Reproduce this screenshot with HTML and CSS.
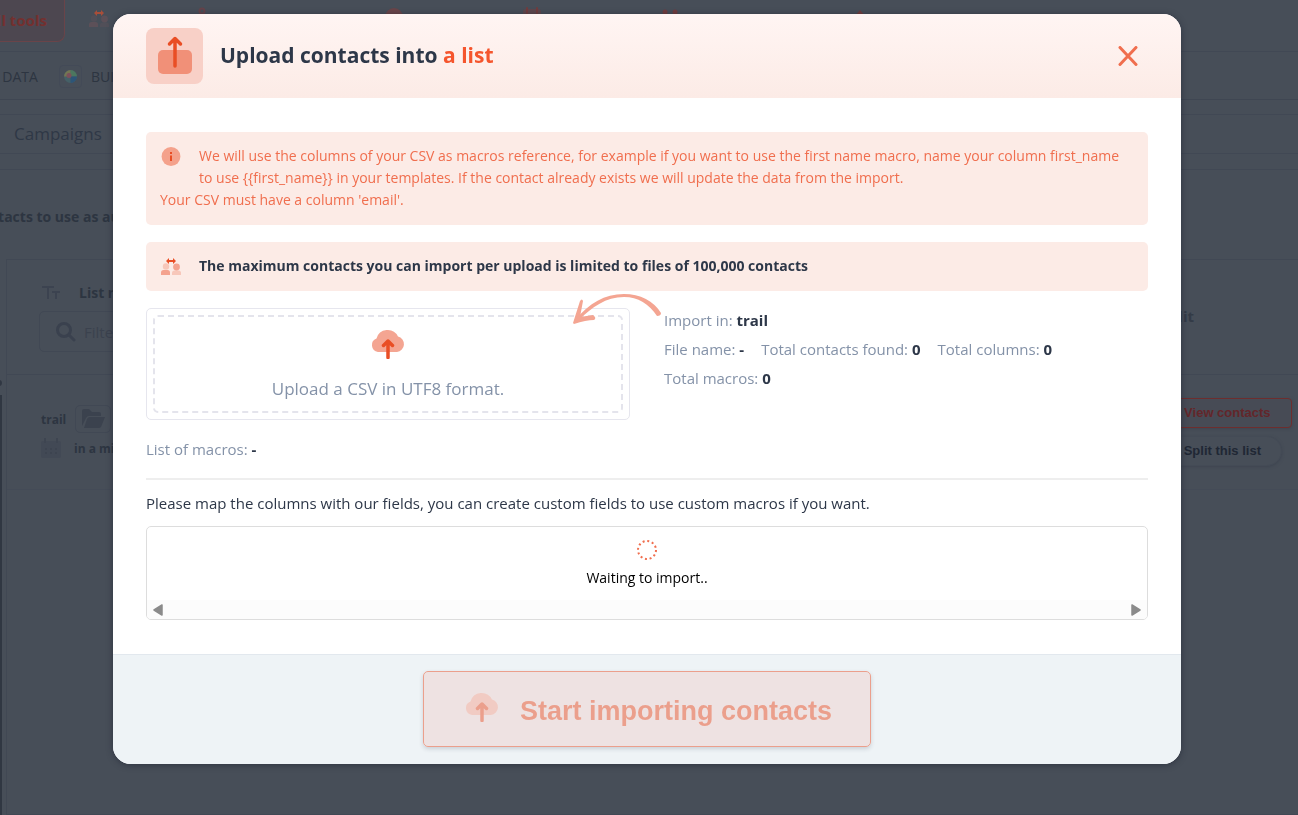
FILE: index.html
```html
<!DOCTYPE html>
<html lang="en">

<head>
    <meta charset="UTF-8">
    <meta name="viewport" content="width=device-width, initial-scale=1.0">
    <title>Upload contacts</title>
    <link rel="stylesheet" href="styles.css">
</head>

<body>
    <!-- shared icons -->
    <svg class="sprite" aria-hidden="true">
        <symbol id="people" viewBox="0 0 20 17">
            <circle cx="5" cy="8.500" r="3.200" fill="currentColor" opacity=".4" />
            <path d="M0 17v-2.500Q0 12 2.500 12h4Q9 12 9 14.500V17z" fill="currentColor" opacity=".8" />
            <circle cx="15.500" cy="9" r="3.400" fill="currentColor" opacity=".8" />
            <path d="M11 17v-2q0-2.500 2.500-2.500h4q2.500 0 2.500 2.500v2z" fill="currentColor" opacity=".4" />
            <path class="people-arrow" d="M5 3l3-3v2h4V0l3 3-3 3V4H8v2z" />
        </symbol>
        <symbol id="cloud" viewBox="0 0 34 30">
            <path d="M7 23a7 7 0 0 1-1.500-13.500A11.500 11.500 0 0 1 27 7.500 7.900 7.900 0 0 1 26 23z" fill="#f4a592" />
            <path d="M17 28.500V12M12.500 16.500L17 12l4.500 4.500" fill="none" stroke="#e94e25" stroke-width="3.500" stroke-linecap="round" stroke-linejoin="round" />
        </symbol>
    </svg>

    <div class="page">
        <div class="tools">
            <button type="button" class="all-tools">All tools</button>
            <svg class="tool-icon people" width="20" height="17"><use href="#people" /></svg>
            <svg class="tool-icon wide" width="20" height="20" viewBox="0 0 20 20"><circle cx="8" cy="5" r="2.500" fill="none" stroke="#65434a" stroke-width="2" /><path d="M8 7v11" stroke="#65434a" stroke-width="2" /></svg>
            <svg class="tool-icon" width="20" height="20" viewBox="0 0 20 20"><circle cx="10" cy="11" r="9" fill="#6a4549" /></svg>
            <svg class="tool-icon" width="20" height="20" viewBox="0 0 20 20"><rect x="1" y="3" width="18" height="16" rx="3" fill="#5e474d" /><path d="M5 2v5M15 2v5" stroke="#703c3e" stroke-width="2" stroke-linecap="round" /></svg>
            <svg class="tool-icon wide" width="20" height="20" viewBox="0 0 20 20"><circle cx="5" cy="6" r="2.500" fill="#703c3e" /><circle cx="15" cy="6" r="2.500" fill="#703c3e" /></svg>
            <svg class="tool-icon" width="20" height="20" viewBox="0 0 20 20"><path d="M10 4l5 6H5z" fill="#703c3e" /></svg>
        </div>
        <div class="subtools">
            <span class="data">GET DATA</span>
            <span class="swirl">
                <svg width="13" height="13" viewBox="0 0 13 13"><circle cx="6.500" cy="6.500" r="6.500" fill="#456067" /><path d="M6.500 0A6.500 6.500 0 0 1 13 6.500H6.500z" fill="#4c775f" /><path d="M13 6.500A6.500 6.500 0 0 1 6.500 13V6.500z" fill="#2d5578" /><path d="M6.500 0A6.500 6.500 0 0 0 0 6.500h6.500z" fill="#737653" /><circle cx="5" cy="5.500" r="2.500" fill="#7c4f5b" /></svg>
            </span>
            <span>BUILD</span>
        </div>
        <nav class="tabs"><a href="#">Campaigns</a></nav>
        <p class="intro">contacts to use as audience</p>
        <div class="list">
            <div class="list-head">
                <div class="filter">
                    <label for="listName">
                        <svg width="18" height="14" viewBox="0 0 18 14" fill="none" stroke="#3c4350" stroke-width="2"><path d="M0 1h12M6 1v12M10 6h8M14 6v7" /></svg>
                        List name
                    </label>
                    <div class="search">
                        <svg width="20" height="20" viewBox="0 0 20 20" fill="none" stroke="#3a414e" stroke-width="3" stroke-linecap="round"><circle cx="8" cy="8" r="6.500" /><path d="M13 13l5 5" /></svg>
                        <input type="text" id="listName" placeholder="Filter">
                    </div>
                </div>
                <span class="split-head">Split</span>
            </div>
            <div class="list-row">
                <div class="list-info">
                    <div class="list-title">trail
                        <span class="folder"><svg width="24" height="20" viewBox="0 0 24 20" fill="#3b424e"><path d="M1 17V2q0-2 2-2h5l3 3h7q2 0 2 2v2H8q-2 0-3 2z" /><path d="M3 19l3-9q1-2 3-2h15l-4 10q-1 1-2 1z" /></svg></span>
                    </div>
                    <div class="list-date">
                        <svg width="20" height="20" viewBox="0 0 20 20"><rect y="3" width="20" height="17" rx="2" fill="#424955" /><path d="M4 0v5M16 0v5" stroke="#3e4551" stroke-width="2" /><path d="M4 11h12M4 15h12" stroke="#3d4450" stroke-width="2" stroke-dasharray="2 3" /></svg>
                        in a minute
                    </div>
                </div>
                <div class="list-actions">
                    <button type="button" class="view">View contacts</button>
                    <button type="button" class="split">Split this list</button>
                </div>
            </div>
        </div>
        <div class="side-handle"></div>
    </div>

    <div class="overlay">
        <div class="modal" role="dialog" aria-labelledby="modalTitle">
            <div class="modal-header">
                <span class="title-icon">
                    <svg width="36" height="40" viewBox="0 0 36 40"><rect x="1" y="14" width="34" height="24" rx="5" fill="#f19078" /><path d="M18 30V3M12.500 8L18 2.500 23.500 8" fill="none" stroke="#e94e25" stroke-width="3.500" stroke-linecap="round" stroke-linejoin="round" /></svg>
                </span>
                <h1 id="modalTitle">Upload contacts into <span>a list</span></h1>
                <button type="button" class="close" aria-label="Close">
                    <svg width="20" height="20" viewBox="0 0 20 20"><path d="M2 1.500l16 17M18 1.500l-16 17" stroke="#f06e4e" stroke-width="3" stroke-linecap="round" /></svg>
                </button>
            </div>

            <div class="modal-body">
                <div class="alert">
                    <div class="alert-line">
                        <svg class="alert-icon" width="22" height="22" viewBox="0 0 22 22"><circle cx="11" cy="11.500" r="9.400" fill="#f4a18b" /><path d="M11 10.500v5.500" stroke="#e94e25" stroke-width="2" /><path d="M11 7v2" stroke="#e94e25" stroke-width="2" /></svg>
                        <p>We will use the columns of your CSV as macros reference, for example if you want to use the first name macro, name your column first_name to use {{first_name}} in your templates. If the contact already exists we will update the data from the import.</p>
                    </div>
                    <p>Your CSV must have a column 'email'.</p>
                </div>
                <div class="alert alert-limit">
                    <div class="alert-line">
                        <svg class="alert-icon people" width="22" height="22" viewBox="-1 -3 22 22"><use href="#people" width="20" height="17" /></svg>
                        <p>The maximum contacts you can import per upload is limited to files of 100,000 contacts</p>
                    </div>
                </div>

                <div class="import">
                    <div class="upload">
                        <label class="drop" for="csvFile">
                            <svg width="34" height="30"><use href="#cloud" /></svg>
                            Upload a CSV in UTF8 format.
                        </label>
                        <input type="file" id="csvFile" accept=".csv">
                        <svg class="arrow" width="90" height="34" viewBox="0 0 90 34" fill="#f4a592">
                            <path d="M3 27C18 10 32 1 52 1c16 0 30 7 37 19q0 3-4 3C77 11 66 4 52 4 34 4 20 14 7 27z" />
                            <path d="M1 30L8 8q2-3 3 0L8 24l13-2q4 3 1 5-8 0-20 4z" />
                        </svg>
                    </div>
                    <div class="stats">
                        <span>Import in: <b>trail</b></span>
                        <div class="stats-row">
                            <span>File name: <b>-</b></span>
                            <span>Total contacts found: <b>0</b></span>
                            <span>Total columns: <b>0</b></span>
                        </div>
                        <span>Total macros: <b>0</b></span>
                    </div>
                </div>

                <p class="macros">List of macros: <b>-</b></p>
                <p class="map-text">Please map the columns with our fields, you can create custom fields to use custom macros if you want.</p>

                <div class="mapping">
                    <div class="waiting">
                        <svg width="20" height="20" viewBox="0 0 20 20"><circle cx="10" cy="10" r="9" fill="none" stroke="#f06e4e" stroke-width="2" stroke-dasharray="2 2.712" /></svg>
                        Waiting to import..
                    </div>
                    <div class="scroll">
                        <svg width="10" height="12" viewBox="0 0 10 12"><path d="M9 1v10L1 6z" fill="#8b8b8b" stroke="#8b8b8b" stroke-width="1.500" stroke-linejoin="round" /></svg>
                        <svg width="10" height="12" viewBox="0 0 10 12"><path d="M1 1v10l8-5z" fill="#8b8b8b" stroke="#8b8b8b" stroke-width="1.500" stroke-linejoin="round" /></svg>
                    </div>
                </div>
            </div>

            <div class="modal-footer">
                <button type="button" class="start" disabled>
                    <svg width="34" height="30"><use href="#cloud" /></svg>
                    Start importing contacts
                </button>
            </div>
        </div>
    </div>
</body>

</html>
```
FILE: styles.css
```css
* {
    box-sizing: border-box;
}

body {
    margin: 0;
    background: #474e58;
    color: #2d3748;
    font-family: "Open Sans", "Noto Sans", sans-serif;
    font-size: 15px;
}

p,
h1 {
    margin: 0;
}

svg {
    display: block;
    flex-shrink: 0;
}

button {
    font-family: "Liberation Sans", Arial, sans-serif;
    font-weight: bold;
}

.sprite {
    position: absolute;
    width: 0;
    height: 0;
}

.people {
    color: #f19078;
}

.people-arrow {
    fill: #e94e25;
}

/* page behind the modal */
.page {
    position: relative;
    display: flex;
    flex-direction: column;
    height: 100vh;
    overflow: hidden;
    color: #2d3541;
}

.tools {
    display: flex;
    align-items: flex-start;
    height: 52px;
    margin-left: -56px;
    border-bottom: 1px solid #414854;
}

.all-tools {
    width: 121px;
    height: 42px;
    padding: 0 17px 2px;
    text-align: right;
    font-family: inherit;
    font-size: 15px;
    color: #74302f;
    background: #4d4750;
    border: 1px solid #6a4449;
    border-top: 0;
    border-radius: 0 0 8px 8px;
}

.tool-icon {
    margin: 6px 59px 0;
}

.tool-icon.wide {
    margin-right: 111px;
}

.tool-icon.people {
    margin: 10px 26px 0 24px;
    color: #74545a;
    opacity: 0.6;
}

.subtools {
    display: flex;
    align-items: center;
    height: 48px;
    padding-top: 2px;
    margin-left: -27px;
    font-size: 14px;
    border-bottom: 1px solid #3f4652;
}

.swirl {
    padding: 4px;
    margin: 0 9px 0 21px;
    border: 1px solid #434a57;
    border-radius: 4px;
}

.tabs {
    height: 40px;
    margin-top: 14px;
    padding-left: 14px;
    line-height: 37px;
    font-size: 17px;
    border: solid #414854;
    border-width: 1px 0;
}

.tabs a {
    color: #2f3846;
    text-decoration: none;
}

.intro {
    height: 90px;
    margin-top: 15px;
    margin-left: -27px;
    padding-top: 36px;
    font-size: 14px;
    font-weight: bold;
    line-height: 22px;
    border-top: 1px solid #414854;
}

.list {
    flex: 1;
    margin-left: 6px;
    border: solid #414854;
    border-width: 1px 0 1px 1px;
}

.list-head {
    display: flex;
    justify-content: space-between;
    height: 115px;
    padding: 22px 104px 0 32px;
    border-bottom: 1px solid #414854;
}

.filter label {
    display: flex;
    align-items: center;
    gap: 19px;
    padding-left: 3px;
    font-size: 14px;
    line-height: 22px;
    font-weight: bold;
}

.search {
    display: flex;
    align-items: center;
    gap: 8px;
    width: 200px;
    height: 41px;
    margin-top: 7px;
    padding-left: 16px;
    border: 1px solid #414854;
    border-radius: 5px;
}

.search input {
    width: 120px;
    padding: 0;
    border: 0;
    background: none;
    font-family: inherit;
    font-size: 15px;
}

.search input::placeholder {
    color: #3b424e;
}

.split-head {
    padding-top: 24px;
    font-weight: bold;
    color: #333b47;
}

.list-row {
    display: flex;
    justify-content: space-between;
    height: 115px;
    padding: 23px 6px 0 34px;
    border-bottom: 1px solid #444b57;
}

.list-title,
.list-date {
    display: flex;
    align-items: center;
    gap: 9px;
    font-size: 12px;
    font-weight: bold;
}

.list-info {
    padding-top: 7px;
}

.list-date {
    gap: 13px;
    margin-top: 5px;
}

.folder {
    padding: 3px 5px;
    border: 1px solid #414854;
    border-radius: 5px;
}

.list-actions {
    display: flex;
    flex-direction: column;
    gap: 8px;
}

.view,
.split {
    height: 30px;
    padding: 0 20px 2px;
    font-size: 13px;
    background: #474b55;
    border: 1px solid #6d2e2e;
    border-radius: 4px;
    color: #63262a;
    box-shadow: 0 1px 3px #3e4550;
}

.split {
    margin-right: 10px;
    background: #474e58;
    border: 1px solid #444b56;
    border-radius: 15px;
    color: #202734;
}

.side-handle {
    position: absolute;
    top: 395px;
    bottom: 0;
    left: 0;
    width: 2px;
    background: #303742;
}

.side-handle::before {
    content: "";
    position: absolute;
    top: -15px;
    left: -4px;
    width: 6px;
    height: 6px;
    border-radius: 3px;
    background: #303742;
}

/* modal */
.overlay {
    position: fixed;
    inset: 0;
    padding: 14px 117px 14px 113px;
    overflow: auto;
}

.modal {
    background: #fff;
    border-radius: 18px;
    overflow: hidden;
    box-shadow: 0 1px 6px rgba(30, 35, 50, 0.6);
}

.modal-header {
    display: flex;
    align-items: center;
    gap: 17px;
    padding: 14px 43px 14px 33px;
    background: linear-gradient(#fff5f3, #fcebe6);
}

.title-icon {
    display: flex;
    justify-content: center;
    width: 57px;
    height: 56px;
    padding-top: 8px;
    background: #f8d0c7;
    border-radius: 8px;
}

h1 {
    padding-bottom: 2px;
    font-size: 21px;
    line-height: 32px;
}

h1 span {
    color: #f5552d;
}

.close {
    margin-left: auto;
    padding: 0;
    border: 0;
    background: none;
}

.modal-body {
    padding: 34px 33px;
}

.alert {
    padding: 13px 14px 14px;
    margin-bottom: 17px;
    font-size: 14px;
    line-height: 22px;
    color: #f06e4e;
    background: #fcebe6;
    border-radius: 5px;
}

.alert-line {
    display: flex;
    gap: 17px;
}

.alert-limit {
    color: #2d3748;
    font-weight: bold;
}

.import {
    display: flex;
    align-items: flex-start;
    gap: 34px;
}

.upload {
    position: relative;
    width: 484px;
    padding: 6px;
    border: 1px solid #e6e6ee;
    border-radius: 5px;
}

.upload input {
    position: absolute;
    width: 1px;
    height: 1px;
    opacity: 0;
}

.drop {
    display: flex;
    flex-direction: column;
    align-items: center;
    gap: 18px;
    height: 98px;
    padding-top: 12px;
    font-size: 17px;
    line-height: 24px;
    color: #8492a8;
    border: 2px dashed #e4e4ec;
    border-radius: 5px;
}

.arrow {
    position: absolute;
    top: -16px;
    right: -33px;
}

.stats {
    flex: 1;
    margin-top: -2px;
    line-height: 29px;
    color: #8492a8;
}

.stats-row {
    display: flex;
    flex-wrap: wrap;
    gap: 0 17px;
}

b {
    color: #2d3748;
}

.macros {
    padding: 18px 0;
    line-height: 22px;
    color: #8492a8;
    border-bottom: 2px solid #eee;
}

.map-text {
    padding: 12px 0;
    line-height: 22px;
}

.mapping {
    border: 1px solid #ddd;
    border-radius: 5px;
    overflow: hidden;
}

.waiting {
    display: flex;
    flex-direction: column;
    align-items: center;
    gap: 7px;
    padding: 13px 0 11px;
    font-size: 14px;
    line-height: 22px;
    color: #000;
}

.scroll {
    display: flex;
    align-items: center;
    justify-content: space-between;
    height: 19px;
    padding: 0 6px;
    background: #fcfcfc;
}

.modal-footer {
    display: flex;
    justify-content: center;
    padding: 16px 0 17px;
    background: #eef3f6;
    border-top: 1px solid #e2e8ee;
}

.start {
    display: flex;
    align-items: center;
    gap: 21px;
    height: 76px;
    padding: 4px 38px 0 41px;
    font-size: 27px;
    color: #e94e25;
    background: rgba(240, 170, 160, 0.45);
    border: 1px solid #e94e25;
    border-radius: 5px;
    box-shadow: 0 2px 4px rgba(60, 70, 90, 0.4);
    opacity: 0.5;
}

.start svg {
    margin-bottom: 8px;
}
```
